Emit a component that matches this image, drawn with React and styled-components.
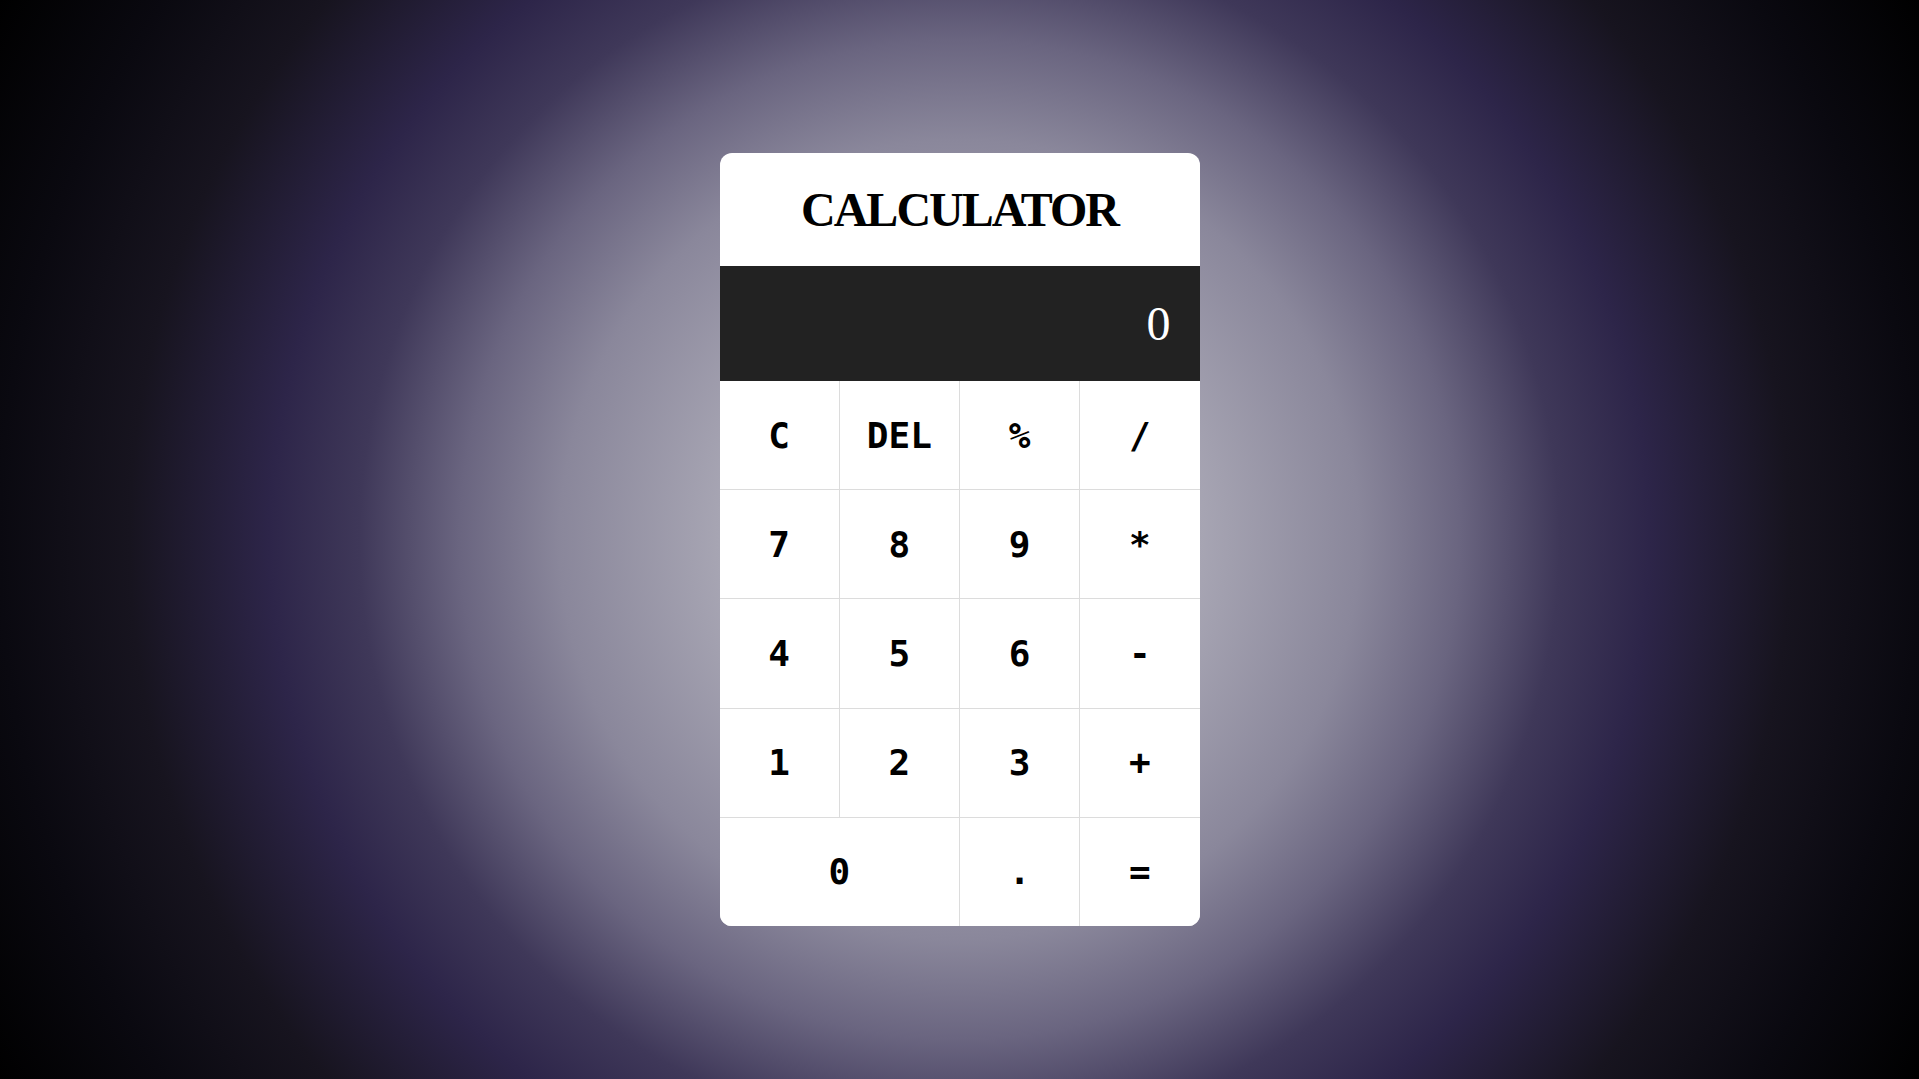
import React, { useState } from "react";
import styled, { createGlobalStyle } from "styled-components";

const GlobalStyle = createGlobalStyle`
  html,
  body {
    margin: 0;
    padding: 0;
    min-height: 100%;
  }
  body {
    background: radial-gradient(
      circle at center,
      #bcbac6 0px,
      #a7a5b3 240px,
      #8a879b 400px,
      #6a6580 500px,
      #3f3859 600px,
      #2d2549 690px,
      #17141f 830px,
      #0a0910 960px,
      #000 1101px
    );
    background-attachment: fixed;
  }
`;

const Page = styled.main`
  min-height: 100vh;
  display: flex;
  align-items: center;
  justify-content: center;
`;

const Card = styled.div`
  width: 480px;
  background-color: #fff;
  border-radius: 12px;
  overflow: hidden;
`;

const Title = styled.h1`
  margin: 0;
  height: 113px;
  display: flex;
  align-items: center;
  justify-content: center;
  font-family: "Liberation Serif", "Times New Roman", serif;
  font-weight: bold;
  font-size: 48px;
  letter-spacing: -2px;
  color: #000;
`;

const Screen = styled.div`
  height: 115px;
  background-color: #222;
  color: #fff;
  display: flex;
  align-items: center;
  justify-content: flex-end;
  padding: 0 29px;
  font-family: "Liberation Serif", "Times New Roman", serif;
  font-size: 48px;
`;

const Keys = styled.div`
  display: grid;
  grid-template-columns: repeat(4, 1fr);
  grid-template-rows: repeat(5, 108.2px);
  gap: 1px;
  background-color: #dcdcdc;
`;

const Key = styled.button`
  grid-column: span ${(p) => (p.$wide ? 2 : 1)};
  border: none;
  background-color: #fff;
  color: #000;
  font-family: "DejaVu Sans Mono", monospace;
  font-weight: bold;
  font-size: 36px;
  cursor: pointer;
  padding: 0;
  transition: background-color 0.2s;

  &:hover {
    background-color: #f2f2f2;
  }
`;

const keys = [
  "C", "DEL", "%", "/",
  "7", "8", "9", "*",
  "4", "5", "6", "-",
  "1", "2", "3", "+",
  "0", ".", "=",
];

const App = () => {
  const [value, setValue] = useState("0");

  const press = (k) => {
    if (k === "C") return setValue("0");
    if (k === "DEL") return setValue((v) => (v.length > 1 ? v.slice(0, -1) : "0"));
    if (k === "=") {
      try {
        // eslint-disable-next-line no-new-func
        const out = Function(`return (${value.replace(/%/g, "/100")})`)();
        return setValue(String(out));
      } catch (e) {
        return setValue("Error");
      }
    }
    setValue((v) => (v === "0" || v === "Error" ? k : v + k));
  };

  return (
    <>
      <GlobalStyle />
      <Page>
        <Card>
          <Title>CALCULATOR</Title>
          <Screen>{value}</Screen>
          <Keys>
            {keys.map((k) => (
              <Key key={k} $wide={k === "0"} onClick={() => press(k)}>
                {k}
              </Key>
            ))}
          </Keys>
        </Card>
      </Page>
    </>
  );
};

export default App;
